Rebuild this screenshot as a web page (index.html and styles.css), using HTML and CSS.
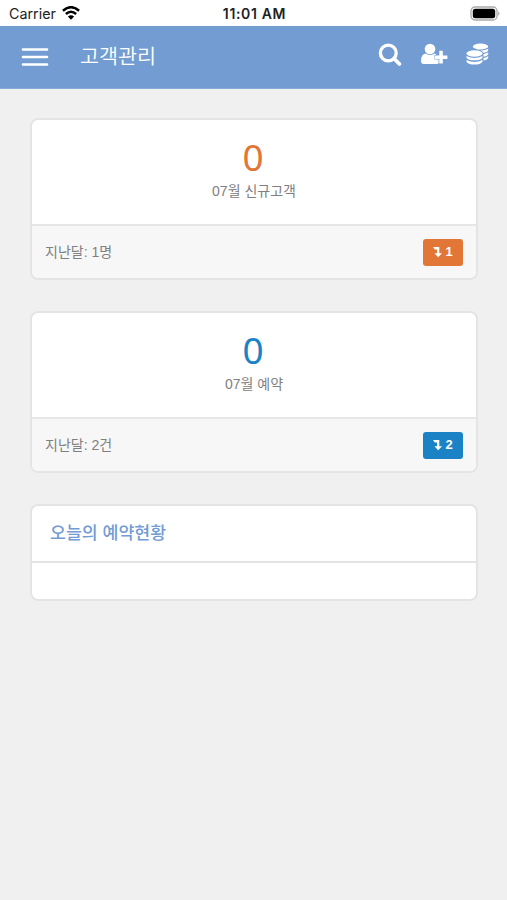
FILE: index.html
```html
<!DOCTYPE html>
<html lang="ko">
<head>
<meta charset="utf-8">
<meta name="viewport" content="width=device-width, initial-scale=1">
<title>고객관리</title>
<link rel="stylesheet" href="styles.css">
</head>
<body>
<div class="status">
  <div class="carrier"><span>Carrier</span>
    <svg class="wifi" width="18" height="14" viewBox="0 0 18 14"><g fill="none" stroke="#000" stroke-width="2.5"><path d="M.9 4.7Q9-2.3 17.100 4.700"/><path d="M3.900 8Q9 3.400 14.100 8"/></g><path d="M9 13.700L5.900 10.500Q9 7.800 12.100 10.500Z"/></svg>
  </div>
  <div class="time">11:01 AM</div>
  <svg class="battery" width="31" height="15" viewBox="0 0 31 15"><rect x="1" y="1" width="26" height="13" rx="4" fill="#fff" stroke="#aaa" stroke-width="1.300"/><rect x="2.800" y="2.700" width="22.400" height="9.600" rx="2.500"/><path d="M28.300 5.200Q30.600 7.500 28.300 9.800Z" fill="#999"/></svg>
</div>
<header class="navbar">
  <svg class="menu" width="28" height="20" viewBox="0 0 28 20"><g fill="none" stroke="#fff" stroke-width="2.600" stroke-linecap="round"><path d="M2 2.500h24M2 10h24M2 17.500h24"/></g></svg>
  <h1 class="title">고객관리</h1>
  <nav class="actions">
    <svg width="24" height="24" viewBox="0 0 24 24"><g fill="none" stroke="#fff"><circle cx="10.300" cy="10" r="7.900" stroke-width="3.300"/><path d="M16 15.500l5.400 5.500" stroke-width="3.700" stroke-linecap="round"/></g></svg>
    <svg width="28" height="24" viewBox="0 0 28 24" fill="#fff"><circle cx="10" cy="6" r="5.300"/><path d="M5.700 10.500Q10 13.600 14.400 10.500Q15.900 10.800 16.500 11.800H14.500V16.500H18.600V20.200Q18 21 16.500 21H4Q1 21 1 18Q1 11 5.700 10.500Z"/><path d="M19.300 7.800h3.500v4.600h4.600v3.500h-4.600v4.600h-3.500v-4.600h-4.400v-3.500h4.400z"/></svg>
    <svg width="24" height="24" viewBox="0 0 24 24" fill="#fff"><ellipse cx="14.500" cy="3.500" rx="7.700" ry="3"/><path d="M22.200 5.700v1.500q-.8 2.200-4.700 2.600Q15.500 6.700 10 5.900l-.5-.1Q16 9 22.200 5.700ZM17.500 10.900Q20.700 10.500 22.200 9.200v2q-1 2-4.700 2.500ZM17.500 14.900Q20.700 14.500 22.200 13v2q-1 2-4.700 2.600Z"/><ellipse cx="8.500" cy="10.500" rx="8" ry="3.200"/><path d="M.5 13Q8.500 17.200 16.500 13V14.700C14.500 18.200 2.500 18.200 .5 14.700ZM.5 16.900Q8.500 21.100 16.500 16.900V18.700C14.500 22.500 2.500 22.500 .5 18.700Z"/></svg>
  </nav>
</header>
<main class="content">
  <section class="card orange">
    <div class="summary"><div class="count">0</div><div class="label">07월 신규고객</div></div>
    <div class="footer"><span class="previous">지난달: 1명</span><span class="badge"><svg width="9" height="12" viewBox="0 0 9 12"><path d="M0 1h6.300v6.200H9L5.200 11.300 1.400 7.200H4V3.400H1.800Z" fill="#fff"/></svg>1</span></div>
  </section>
  <section class="card blue">
    <div class="summary"><div class="count">0</div><div class="label">07월 예약</div></div>
    <div class="footer"><span class="previous">지난달: 2건</span><span class="badge"><svg width="9" height="12" viewBox="0 0 9 12"><path d="M0 1h6.300v6.200H9L5.200 11.300 1.400 7.200H4V3.400H1.800Z" fill="#fff"/></svg>2</span></div>
  </section>
  <section class="card today">
    <h2 class="heading">오늘의 예약현황</h2>
    <div class="empty"></div>
  </section>
</main>
</body>
</html>
```
FILE: styles.css
```css
* { box-sizing: border-box; }
body {
  margin: 0;
  min-height: 900px;
  background: #f0f0f0;
  color: #808080;
  font-family: "Liberation Sans", "Noto Sans CJK KR", sans-serif;
}
svg { display: block; flex: none; }
.status {
  display: grid;
  grid-template-columns: 1fr auto 1fr;
  align-items: center;
  height: 26px;
  padding: 1px 6px 0 9px;
  background: #fff;
  color: #222;
  font: 14.3px/24px Inter, sans-serif;
}
.carrier { display: flex; align-items: center; gap: 6px; }
.wifi, .battery { margin-top: -1px; }
.time { font-size: 14px; font-weight: 600; letter-spacing: .65px; margin-left: -1px; }
.battery { justify-self: end; }
.navbar {
  display: flex;
  align-items: center;
  height: 63px;
  padding: 0 17px 0 21px;
  background: #739dd2;
  border-bottom: 1px solid #88aad5;
}
.title {
  margin: 0 0 0 31px;
  color: #fff;
  font-size: 20.7px;
  font-weight: 350;
  line-height: 30px;
}
.actions { display: flex; align-items: center; gap: 18px; margin: -5px 0 0 auto; }
.content { display: grid; gap: 31px; padding: 29px 29px 0 30px; }
.card {
  overflow: hidden;
  border: 2px solid #e4e4e4;
  border-radius: 8px;
  background: #fff;
}
.summary { height: 104px; padding-top: 16px; text-align: center; }
.count { margin-left: -2px; font: 37px/42px "Noto Sans", sans-serif; }
.label { margin-top: 2px; font-size: 14px; line-height: 22px; }
.orange .count { color: #e17636; }
.blue .count { color: #1b83c5; }
.footer {
  display: flex;
  align-items: center;
  justify-content: space-between;
  height: 54px;
  padding: 0 13px;
  border-top: 2px solid #e6e6e6;
  background: #f7f7f7;
}
.previous { margin-top: -1px; font-size: 14px; line-height: 20px; }
.badge {
  display: flex;
  align-items: center;
  justify-content: center;
  gap: 3px;
  width: 40px;
  height: 27px;
  border-radius: 3px;
  color: #fff;
  font: 700 13px/20px "Liberation Sans", sans-serif;
}
.orange .badge { background: #e17636; }
.blue .badge { background: #1b83c5; }
.heading {
  height: 57px;
  margin: 0;
  padding: 0 18px;
  border-bottom: 2px solid #e4e4e4;
  color: #739bd5;
  font-size: 17.3px;
  font-weight: 500;
  line-height: 55px;
}
.empty { height: 36px; }
```
